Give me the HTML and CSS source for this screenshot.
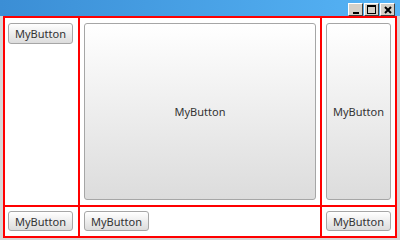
FILE: index.html
```html
<!DOCTYPE html>
<html lang="en">
<head>
    <meta charset="UTF-8">
    <title>MyButton Grid</title>
    <link rel="stylesheet" href="styles.css">
</head>
<body>
    <div class="window">
        <div class="titlebar">
            <div class="controls">
                <span class="ctl"><svg width="8" height="8" viewBox="0 0 8 8"><rect x="1" y="6" width="6" height="2" fill="#000"/></svg></span>
                <span class="ctl"><svg width="9" height="9" viewBox="0 0 9 9"><rect x="0.5" y="0.5" width="8" height="8" fill="none" stroke="#000"/><rect x="0" y="0" width="9" height="2" fill="#000"/></svg></span>
                <span class="ctl"><svg width="8" height="8" viewBox="0 0 8 8"><path d="M1 1 L7 7 M7 1 L1 7" stroke="#000" stroke-width="2"/></svg></span>
            </div>
        </div>
        <div class="grid">
            <div class="cell first"><button class="btn">MyButton</button></div>
            <div class="cell"><button class="btn fill">MyButton</button></div>
            <div class="cell"><button class="btn fill">MyButton</button></div>
            <div class="cell first bottom"><button class="btn">MyButton</button></div>
            <div class="cell bottom"><button class="btn">MyButton</button></div>
            <div class="cell bottom"><button class="btn">MyButton</button></div>
        </div>
    </div>
</body>
</html>
```

FILE: styles.css
```css
body {
    margin: 0;
    padding: 0;
    background: #ffffff;
}
.window {
    width: 400px;
    height: 240px;
    background: #d6d6d6;
    display: flex;
    flex-direction: column;
}
.titlebar {
    height: 16px;
    background: linear-gradient(to right, #3b8ed5, #56b4f6);
    display: flex;
    justify-content: flex-end;
    align-items: flex-end;
    padding-right: 5px;
}
.controls {
    display: flex;
    gap: 1px;
}
.ctl {
    width: 15px;
    height: 13px;
    background: #d4d0c8;
    border-top: 1px solid #ffffff;
    border-left: 1px solid #ffffff;
    border-right: 1px solid #404040;
    border-bottom: 1px solid #404040;
    box-sizing: border-box;
    display: flex;
    align-items: center;
    justify-content: center;
}
.grid {
    margin: 0 3px;
    display: grid;
    grid-template-columns: 73px 240px 73px;
    grid-template-rows: 187px 29px;
    gap: 2px;
    padding: 2px;
    background: #ff0000;
    width: fit-content;
}
.cell {
    background: #ffffff;
    padding: 5px 4px;
    display: flex;
    align-items: flex-start;
}
.cell.first {
    padding-left: 3px;
}
.cell.bottom {
    padding-top: 4px;
}
.btn {
    width: 65px;
    height: 21px;
    margin: 0;
    padding: 0;
    font-family: "Noto Sans", sans-serif;
    font-size: 11px;
    color: #333333;
    background: linear-gradient(to bottom, #ffffff, #dcdcdc);
    border: 1px solid #a6a6a6;
    border-radius: 3px;
    box-sizing: border-box;
}
.cell.bottom .btn {
    height: 20px;
}
.btn.fill {
    width: 100%;
    height: 100%;
}
```
